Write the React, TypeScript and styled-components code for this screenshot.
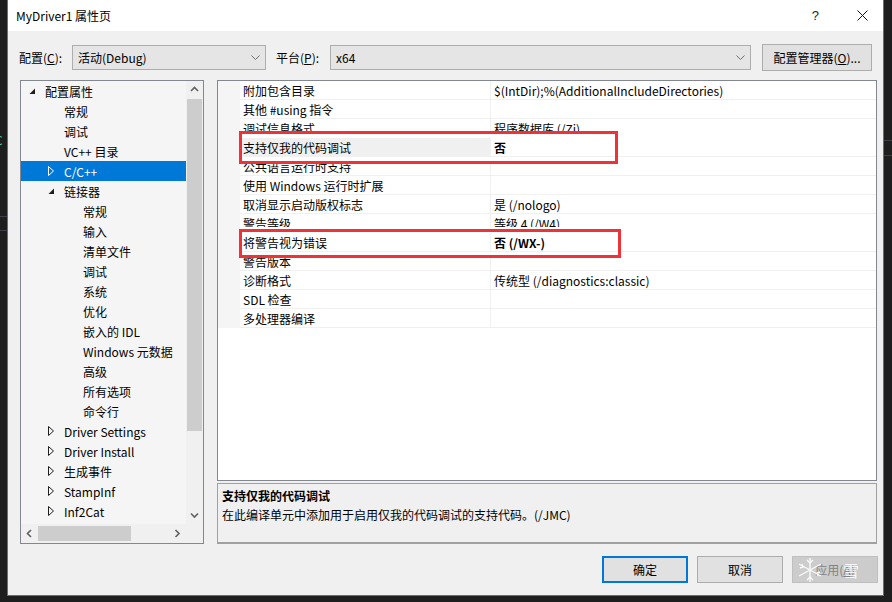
import styled, { createGlobalStyle } from "styled-components"

const GlobalStyle = createGlobalStyle`
  html, body {
    margin: 0;
    padding: 0;
    background: #1e1e1e;
  }
  body {
    font-family: "Noto Sans CJK SC", "Noto Sans", sans-serif;
    font-size: 12px;
    color: #000;
  }
`

type TreeItem = { label: string; level: number; arrow?: "open" | "closed"; selected?: boolean }

const treeItems: TreeItem[] = [
  { label: "配置属性", level: 0, arrow: "open" },
  { label: "常规", level: 1 },
  { label: "调试", level: 1 },
  { label: "VC++ 目录", level: 1 },
  { label: "C/C++", level: 1, arrow: "closed", selected: true },
  { label: "链接器", level: 1, arrow: "open" },
  { label: "常规", level: 2 },
  { label: "输入", level: 2 },
  { label: "清单文件", level: 2 },
  { label: "调试", level: 2 },
  { label: "系统", level: 2 },
  { label: "优化", level: 2 },
  { label: "嵌入的 IDL", level: 2 },
  { label: "Windows 元数据", level: 2 },
  { label: "高级", level: 2 },
  { label: "所有选项", level: 2 },
  { label: "命令行", level: 2 },
  { label: "Driver Settings", level: 1, arrow: "closed" },
  { label: "Driver Install", level: 1, arrow: "closed" },
  { label: "生成事件", level: 1, arrow: "closed" },
  { label: "StampInf", level: 1, arrow: "closed" },
  { label: "Inf2Cat", level: 1, arrow: "closed" },
]

type Prop = { name: string; value?: string; bold?: boolean; active?: boolean; cutTop?: number; cutBottom?: number }

const props: Prop[] = [
  { name: "附加包含目录", value: "$(IntDir);%(AdditionalIncludeDirectories)" },
  { name: "其他 #using 指令" },
  { name: "调试信息格式", value: "程序数据库 (/Zi)", cutBottom: 7 },
  { name: "支持仅我的代码调试", value: "否", bold: true, active: true },
  { name: "公共语言运行时支持", cutTop: 7 },
  { name: "使用 Windows 运行时扩展" },
  { name: "取消显示启动版权标志", value: "是 (/nologo)" },
  { name: "警告等级", value: "等级 4 (/W4)", cutBottom: 6 },
  { name: "将警告视为错误", value: "否 (/WX-)", bold: true },
  { name: "警告版本", cutTop: 6 },
  { name: "诊断格式", value: "传统型 (/diagnostics:classic)" },
  { name: "SDL 检查" },
  { name: "多处理器编译" },
]

const Chevron = ({ dir }: { dir: "up" | "down" | "left" | "right" }) => {
  const pts = {
    up: "1,5 4.5,1.5 8,5",
    down: "1,1.5 4.5,5 8,1.5",
    left: "5,1 1.5,4.5 5,8",
    right: "1.5,1 5,4.5 1.5,8",
  }[dir]
  const vertical = dir === "up" || dir === "down"
  return (
    <svg width={vertical ? 9 : 7} height={vertical ? 7 : 9}>
      <polyline points={pts} fill="none" stroke="#606060" strokeWidth="1.6" />
    </svg>
  )
}

const ComboArrow = () => (
  <svg width="9" height="6">
    <polyline points="0.5,0.5 4.5,4.5 8.5,0.5" fill="none" stroke="#707070" strokeWidth="1" />
  </svg>
)

const App = () => {
  return (
    <>
      <GlobalStyle />
      <Page>
        <Backdrop>
          <CodeMark>C</CodeMark>
          <Line $top={68} />
          <Line $top={13} />
        </Backdrop>
        <Window>
          <TitleBar>
            <Title>MyDriver1 属性页</Title>
            <TitleButtons>
              <Help>?</Help>
              <svg width="11" height="11">
                <path d="M0.5 0.5 L10.5 10.5 M10.5 0.5 L0.5 10.5" stroke="#111" strokeWidth="1" />
              </svg>
            </TitleButtons>
          </TitleBar>

          <ConfigRow>
            <Label $w={53}>
              配置(<u>C</u>):
            </Label>
            <Combo $w={194}>
              <span>活动(Debug)</span>
              <ComboArrow />
            </Combo>
            <Label $w={54} $ml={10}>
              平台(<u>P</u>):
            </Label>
            <Combo $w={421}>
              <span>x64</span>
              <ComboArrow />
            </Combo>
            <ManagerButton>
              配置管理器(<u>O</u>)...
            </ManagerButton>
          </ConfigRow>

          <Main>
            <Tree>
              <TreeList>
                {treeItems.map((it, i) => (
                  <TreeRow key={i} $level={it.level} $selected={!!it.selected}>
                    <Twisty>
                      {it.arrow === "open" && (
                        <svg width="7" height="7">
                          <polygon points="6,0.5 6,6 0.5,6" fill="#1e1e1e" />
                        </svg>
                      )}
                      {it.arrow === "closed" && (
                        <svg width="7" height="10">
                          <polygon
                            points="0.5,0.5 5.5,5 0.5,9.5"
                            fill="none"
                            stroke={it.selected ? "#fff" : "#1e1e1e"}
                            strokeWidth="1"
                          />
                        </svg>
                      )}
                    </Twisty>
                    <span>{it.label}</span>
                  </TreeRow>
                ))}
              </TreeList>
              <VScroll>
                <ScrollArrow>
                  <Chevron dir="up" />
                </ScrollArrow>
                <VThumb />
                <VTrack />
                <ScrollArrow>
                  <Chevron dir="down" />
                </ScrollArrow>
              </VScroll>
              <HScroll>
                <HArrow>
                  <Chevron dir="left" />
                </HArrow>
                <HThumb />
                <HTrack />
                <HArrow>
                  <Chevron dir="right" />
                </HArrow>
              </HScroll>
              <Corner />
            </Tree>

            <RightCol>
              <Grid>
                {props.map((p, i) => (
                  <PropRow key={i}>
                    <Margin />
                    <NameCell $active={!!p.active} $cutTop={p.cutTop ?? 0} $cutBottom={p.cutBottom ?? 0}>
                      {p.name}
                    </NameCell>
                    <ValueCell $bold={!!p.bold} $cutTop={p.cutTop ?? 0} $cutBottom={p.cutBottom ?? 0}>
                      {p.value}
                    </ValueCell>
                  </PropRow>
                ))}
                <RedBox $top={50} $h={33} $w={379} />
                <RedBox $top={148} $h={29} $w={382} />
              </Grid>
              <Description>
                <DescTitle>支持仅我的代码调试</DescTitle>
                <div>在此编译单元中添加用于启用仅我的代码调试的支持代码。(/JMC)</div>
              </Description>
            </RightCol>
          </Main>

          <Footer>
            <Button $primary>确定</Button>
            <Button>取消</Button>
            <Button $disabled>
              应用(<u>A</u>)
              <Watermark>
                <svg width="30" height="28" viewBox="0 0 30 28">
                  <g stroke="#fff" strokeWidth="1.4" fill="none" opacity="0.9">
                    <path d="M15 2 V26 M4 8 L26 20 M26 8 L4 20" />
                    <path d="M12 4 L15 7 L18 4 M12 24 L15 21 L18 24" />
                    <path d="M5 12 L8 11 L7 8 M25 16 L22 17 L23 20" />
                  </g>
                </svg>
                <Snow>雪</Snow>
              </Watermark>
            </Button>
          </Footer>
        </Window>
        <RightStrip>
          <Line $top={140} />
          <Line $top={14} />
        </RightStrip>
      </Page>
    </>
  )
}

export default App

const Page = styled.div`
  width: 892px;
  height: 602px;
  display: flex;
  overflow: hidden;
  background: #1e1e1e;
`
const Backdrop = styled.div`
  width: 7px;
  flex-shrink: 0;
  display: flex;
  flex-direction: column;
  padding-top: 134px;
  overflow: hidden;
`
const CodeMark = styled.div`
  color: #4ec9b0;
  font-family: "DejaVu Sans Mono", monospace;
  font-size: 13px;
  line-height: 14px;
  margin-left: -5px;
`
const Line = styled.div<{ $top: number }>`
  height: 1px;
  background: #3f3f46;
  margin-top: ${({ $top }) => $top}px;
`
const RightStrip = styled.div`
  flex: 1;
  display: flex;
  flex-direction: column;
  background: #1e1e1e;
`
const Window = styled.div`
  width: 877px;
  height: 596px;
  flex-shrink: 0;
  box-sizing: border-box;
  border: 1px solid #1883d7;
  border-top: none;
  background: #f0f0f0;
  display: flex;
  flex-direction: column;
`
const TitleBar = styled.div`
  height: 31px;
  background: #fff;
  display: flex;
  align-items: center;
  justify-content: space-between;
  padding: 0 15px 0 8px;
`
const Title = styled.div`
  font-size: 12px;
  color: #000;
  margin-top: -1px;
`
const TitleButtons = styled.div`
  display: flex;
  align-items: center;
  gap: 38px;
`
const Help = styled.span`
  font-size: 13px;
  font-family: "Liberation Sans", sans-serif;
  color: #222;
`
const ConfigRow = styled.div`
  height: 49px;
  box-sizing: border-box;
  padding: 13px 0 0 11px;
  display: flex;
  align-items: flex-start;
`
const Label = styled.div<{ $w: number; $ml?: number }>`
  width: ${({ $w }) => $w}px;
  margin-left: ${({ $ml }) => $ml ?? 0}px;
  height: 27px;
  display: flex;
  align-items: center;
  flex-shrink: 0;
`
const Combo = styled.div<{ $w: number }>`
  width: ${({ $w }) => $w}px;
  height: 25px;
  margin-top: 1px;
  box-sizing: border-box;
  border: 1px solid #adadad;
  background: #e5e5e5;
  display: flex;
  align-items: center;
  justify-content: space-between;
  padding: 0 5px 0 5px;
  flex-shrink: 0;
  svg {
    margin-top: 1px;
  }
`
const ManagerButton = styled.div`
  width: 110px;
  height: 27px;
  margin-left: 11px;
  box-sizing: border-box;
  border: 1px solid #adadad;
  background: #e1e1e1;
  display: flex;
  align-items: center;
  justify-content: center;
  flex-shrink: 0;
`
const Main = styled.div`
  height: 464px;
  display: flex;
  padding-left: 12px;
  gap: 13px;
`
const Tree = styled.div`
  width: 184px;
  height: 464px;
  box-sizing: border-box;
  border: 1px solid #828790;
  background: #f0f0f0;
  display: grid;
  grid-template-columns: 165px 17px;
  grid-template-rows: 443px 19px;
  flex-shrink: 0;
`
const TreeList = styled.div`
  background: #f5f5f5;
  overflow: hidden;
`
const TreeRow = styled.div<{ $level: number; $selected: boolean }>`
  height: 20px;
  display: flex;
  align-items: center;
  padding-left: ${({ $level }) => 8 + $level * 19}px;
  white-space: nowrap;
  background: ${({ $selected }) => ($selected ? "#0078d7" : "transparent")};
  color: ${({ $selected }) => ($selected ? "#fff" : "#000")};
`
const Twisty = styled.div`
  width: 16px;
  height: 20px;
  display: flex;
  align-items: center;
  flex-shrink: 0;
`
const VScroll = styled.div`
  display: flex;
  flex-direction: column;
  background: #f0f0f0;
`
const ScrollArrow = styled.div`
  height: 17px;
  display: flex;
  align-items: center;
  justify-content: center;
`
const VThumb = styled.div`
  height: 332px;
  margin: 1px 1px 0 1px;
  background: #cdcdcd;
`
const VTrack = styled.div`
  flex: 1;
`
const HScroll = styled.div`
  display: flex;
  align-items: center;
  background: #f0f0f0;
`
const HArrow = styled.div`
  width: 17px;
  height: 19px;
  display: flex;
  align-items: center;
  justify-content: center;
`
const HThumb = styled.div`
  width: 93px;
  height: 15px;
  background: #cdcdcd;
`
const HTrack = styled.div`
  flex: 1;
`
const Corner = styled.div`
  background: #f0f0f0;
`
const RightCol = styled.div`
  width: 660px;
  display: flex;
  flex-direction: column;
  gap: 2px;
  flex-shrink: 0;
`
const Grid = styled.div`
  position: relative;
  height: 401px;
  box-sizing: border-box;
  border: 1px solid #828790;
  background: #fff;
  display: flex;
  flex-direction: column;
`
const PropRow = styled.div`
  height: 19px;
  display: flex;
`
const Margin = styled.div`
  width: 22px;
  background: #f5f5f5;
  flex-shrink: 0;
`
const Cell = styled.div<{ $cutTop: number; $cutBottom: number }>`
  height: 19px;
  box-sizing: border-box;
  border-bottom: 1px solid #f0f0f0;
  display: flex;
  align-items: center;
  white-space: nowrap;
  overflow: hidden;
  clip-path: inset(${({ $cutTop }) => $cutTop}px 0 ${({ $cutBottom }) => $cutBottom}px 0);
`
const NameCell = styled(Cell)<{ $active: boolean }>`
  width: 251px;
  padding-left: 3px;
  border-right: 1px solid #f0f0f0;
  background: ${({ $active }) => ($active ? "#f0f0f0" : "transparent")};
`
const ValueCell = styled(Cell)<{ $bold: boolean }>`
  flex: 1;
  padding-left: 3px;
  font-weight: ${({ $bold }) => ($bold ? 700 : 400)};
`
const RedBox = styled.div<{ $top: number; $h: number; $w: number }>`
  position: absolute;
  left: 21px;
  top: ${({ $top }) => $top}px;
  width: ${({ $w }) => $w}px;
  height: ${({ $h }) => $h}px;
  box-sizing: border-box;
  border: 3px solid #ee3338;
`
const Description = styled.div`
  height: 61px;
  box-sizing: border-box;
  border: 1px solid #a0a0a0;
  border-bottom: 2px solid #a0a0a0;
  background: #f0f0f0;
  padding: 2px 4px;
  line-height: 19px;
`
const DescTitle = styled.div`
  font-weight: 700;
`
const Footer = styled.div`
  flex: 1;
  display: flex;
  justify-content: flex-end;
  align-items: flex-start;
  padding: 12px 5px 0 0;
  gap: 9px;
`
const Button = styled.div<{ $primary?: boolean; $disabled?: boolean }>`
  position: relative;
  width: 86px;
  height: 27px;
  box-sizing: border-box;
  border: ${({ $primary, $disabled }) =>
    $primary ? "2px solid #0078d7" : $disabled ? "1px solid #bfbfbf" : "1px solid #adadad"};
  background: ${({ $disabled }) => ($disabled ? "#cccccc" : "#e1e1e1")};
  color: ${({ $disabled }) => ($disabled ? "#838383" : "#000")};
  display: flex;
  align-items: center;
  justify-content: center;
`
const Watermark = styled.div`
  position: absolute;
  left: 2px;
  top: -1px;
  display: flex;
  align-items: center;
  gap: 18px;
  pointer-events: none;
`
const Snow = styled.span`
  color: rgba(255, 255, 255, 0.85);
  font-size: 16px;
`
